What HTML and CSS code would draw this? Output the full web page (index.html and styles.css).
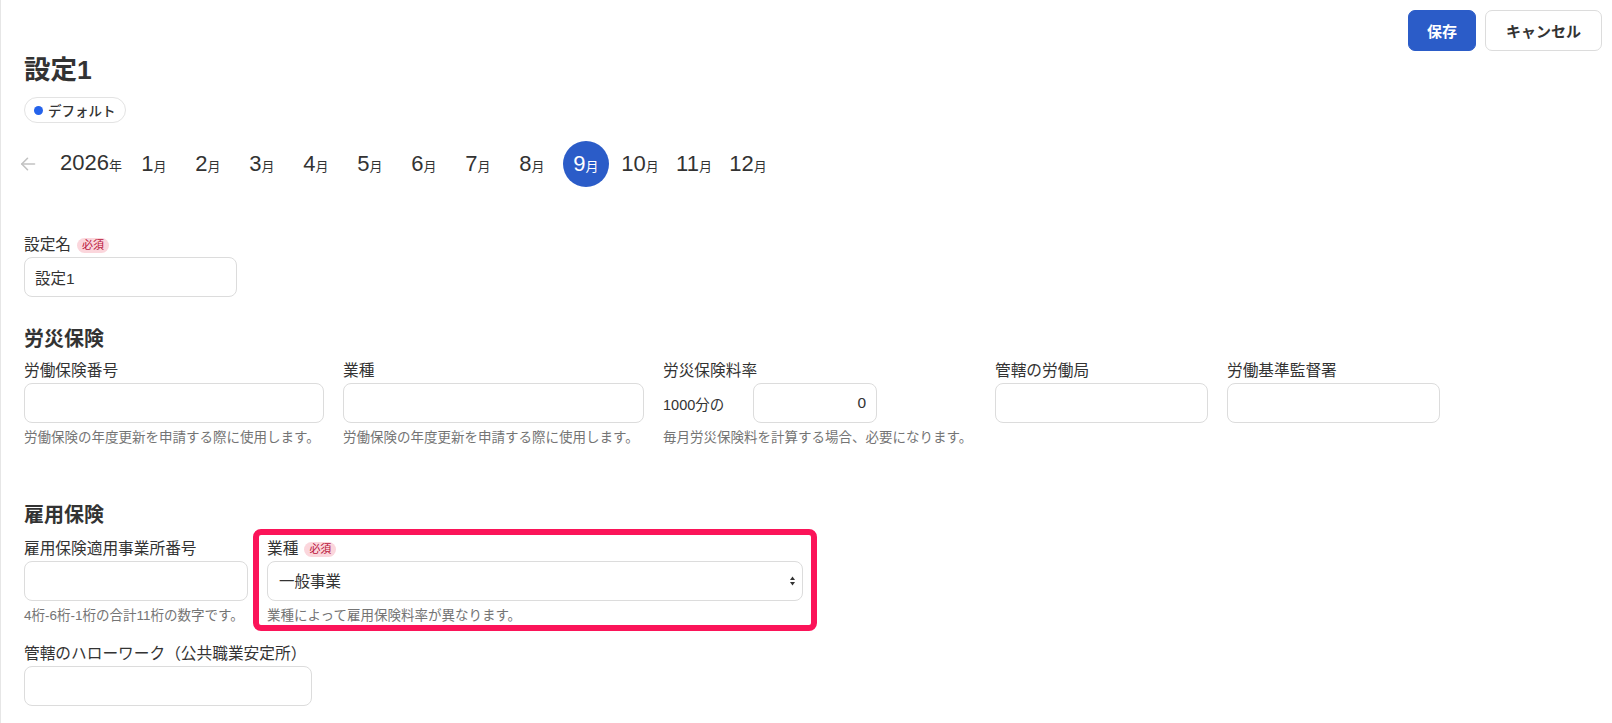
FILE: index.html
```html
<!DOCTYPE html>
<html lang="ja">
<head>
    <meta charset="utf-8">
    <title>設定1</title>
    <link rel="stylesheet" href="styles.css">
</head>
<body>
    <div class="page">
        <div class="actions">
            <button class="btn btn-primary">保存</button>
            <button class="btn btn-cancel">キャンセル</button>
        </div>

        <h1 class="title">設定1</h1>
        <span class="badge"><span class="dot"></span>デフォルト</span>

        <div class="months">
            <button class="prev" aria-label="前の年">
                <svg width="16" height="16" viewBox="0 0 16 16" fill="none" stroke="#c2c2c2" stroke-width="1.6" stroke-linecap="round" stroke-linejoin="round">
                    <path d="M14.5 8H1.8"/>
                    <path d="M7.5 2.3L1.8 8l5.7 5.7"/>
                </svg>
            </button>
            <div class="year">2026<small>年</small></div>
            <ul class="month-list">
                <li>1<small>月</small></li>
                <li>2<small>月</small></li>
                <li>3<small>月</small></li>
                <li>4<small>月</small></li>
                <li>5<small>月</small></li>
                <li>6<small>月</small></li>
                <li>7<small>月</small></li>
                <li>8<small>月</small></li>
                <li class="active">9<small>月</small></li>
                <li>10<small>月</small></li>
                <li>11<small>月</small></li>
                <li>12<small>月</small></li>
            </ul>
        </div>

        <div class="field field-name">
            <label>設定名<span class="req">必須</span></label>
            <input type="text" class="input w-213" value="設定1">
        </div>

        <h2 class="section">労災保険</h2>
        <div class="row">
            <div class="field w-300">
                <label>労働保険番号</label>
                <input type="text" class="input">
                <p class="help">労働保険の年度更新を申請する際に使用します。</p>
            </div>
            <div class="field w-301">
                <label>業種</label>
                <input type="text" class="input">
                <p class="help">労働保険の年度更新を申請する際に使用します。</p>
            </div>
            <div class="field w-313">
                <label>労災保険料率</label>
                <div class="rate">
                    <span class="rate-unit">1000分の</span>
                    <input type="text" class="input input-num" value="0">
                </div>
                <p class="help">毎月労災保険料を計算する場合、必要になります。</p>
            </div>
            <div class="field w-213">
                <label>管轄の労働局</label>
                <input type="text" class="input">
            </div>
            <div class="field w-213">
                <label>労働基準監督署</label>
                <input type="text" class="input">
            </div>
        </div>

        <h2 class="section section-2">雇用保険</h2>
        <div class="row">
            <div class="field w-224">
                <label>雇用保険適用事業所番号</label>
                <input type="text" class="input">
                <p class="help help-2">4桁-6桁-1桁の合計11桁の数字です。</p>
            </div>
            <div class="field w-536 highlight">
                <label>業種<span class="req">必須</span></label>
                <div class="select-wrap">
                    <select class="input select">
                        <option>一般事業</option>
                    </select>
                    <svg class="select-arrow" width="5" height="10" viewBox="0 0 5 10" fill="#333">
                        <path d="M0 4L2.5 0.6 5 4z"/>
                        <path d="M0 6L2.5 9.4 5 6z"/>
                    </svg>
                </div>
                <p class="help help-2">業種によって雇用保険料率が異なります。</p>
            </div>
        </div>

        <div class="field field-last w-288">
            <label>管轄のハローワーク（公共職業安定所）</label>
            <input type="text" class="input">
        </div>
    </div>
</body>
</html>
```

FILE: styles.css
```css
* {
    margin: 0px;
    padding: 0px;
    box-sizing: border-box;
}
body {
    font-family: "Liberation Sans", "Noto Sans CJK JP", sans-serif;
    color: #333;
    background: #fff;
    border-left: 1px solid #e6e6e6;
    min-height: 100vh;
}
.page {
    padding: 0 0 0 23px;
}

/* top buttons */
.actions {
    display: flex;
    justify-content: flex-end;
    gap: 9px;
    padding: 10px 10px 0 0;
}
.btn {
    height: 41px;
    padding: 0 20px;
    font-family: inherit;
    font-size: 15px;
    font-weight: 700;
    border-radius: 7px;
    border: 1px solid #dcdcdc;
    background: #fff;
    color: #333;
    cursor: pointer;
}
.btn-primary {
    padding: 0 18px;
    background: #2b5cc8;
    border-color: #2b5cc8;
    color: #fff;
}

/* title */
.title {
    margin-top: 1px;
    font-size: 26.5px;
    line-height: 36px;
    font-weight: 700;
}
.badge {
    display: flex;
    align-items: center;
    gap: 5px;
    width: fit-content;
    height: 26px;
    margin-top: 9px;
    padding: 0 9px 0 9px;
    border: 1px solid #e3e3e3;
    border-radius: 13px;
    font-size: 13.5px;
    font-weight: 500;
}
.badge .dot {
    width: 9px;
    height: 9px;
    border-radius: 50%;
    background: #2563eb;
}

/* month navigation */
.months {
    display: flex;
    align-items: center;
    margin: 18px 0 0 -8px;
    height: 46px;
}
.prev {
    width: 24px;
    height: 24px;
    display: flex;
    align-items: center;
    justify-content: center;
    border: none;
    background: none;
    margin-right: 20px;
}
.year {
    font-size: 22px;
    line-height: 46px;
    margin-right: 9px;
}
.year small,
.month-list small {
    font-size: 13px;
}
.month-list {
    display: flex;
    gap: 8px;
    list-style: none;
}
.month-list li {
    width: 46px;
    height: 46px;
    line-height: 46px;
    text-align: center;
    font-size: 22px;
    border-radius: 50%;
    white-space: nowrap;
}
.month-list li.active {
    background: #2b5cc8;
    color: #fff;
}

/* form fields */
.field {
    display: flex;
    flex-direction: column;
}
.field label {
    display: flex;
    align-items: center;
    font-size: 15.7px;
    line-height: 20px;
    height: 20px;
    margin-bottom: 2px;
    white-space: nowrap;
}
.field-name {
    margin-top: 48px;
}
.field-last {
    margin-top: 19px;
}
.req {
    display: inline-block;
    margin-left: 6px;
    padding: 0 5px;
    height: 15px;
    line-height: 15px;
    font-size: 11px;
    color: #b8143a;
    background: #fbd6dc;
    border-radius: 8px;
}
.input {
    width: 100%;
    height: 40px;
    padding: 0 10px;
    font-family: inherit;
    font-size: 15.5px;
    color: #333;
    background: #fff;
    border: 1px solid #dcdcdc;
    border-radius: 8px;
    outline: none;
}
.input-num {
    width: 124px;
    text-align: right;
}
.help {
    margin-top: 6px;
    font-size: 13.5px;
    line-height: 18px;
    color: #747474;
    white-space: nowrap;
}
.help-2 {
    margin-top: 6px;
}

.section {
    margin: 28px 0 8px;
    font-size: 20px;
    line-height: 28px;
    font-weight: 700;
}
.section-2 {
    margin: 54px 0 10px;
}
.row {
    display: flex;
    gap: 19px;
}
.w-213 { width: 213px; }
.w-224 { width: 224px; }
.w-288 { width: 288px; }
.w-300 { width: 300px; }
.w-301 { width: 301px; }
.w-313 { width: 313px; }
.w-536 { width: 536px; }

.rate {
    display: flex;
    align-items: center;
}
.rate-unit {
    width: 90px;
    font-size: 14.5px;
}

.select-wrap {
    position: relative;
}
.select {
    appearance: none;
    -webkit-appearance: none;
    padding: 0 11px;
}
.select-arrow {
    position: absolute;
    right: 8px;
    top: 15px;
}

/* annotation frame */
.highlight {
    position: relative;
}
.highlight::after {
    content: "";
    position: absolute;
    top: -10px;
    bottom: -6px;
    left: -14px;
    right: -14px;
    border: 6px solid #fb1459;
    border-radius: 8px;
    pointer-events: none;
}
```
